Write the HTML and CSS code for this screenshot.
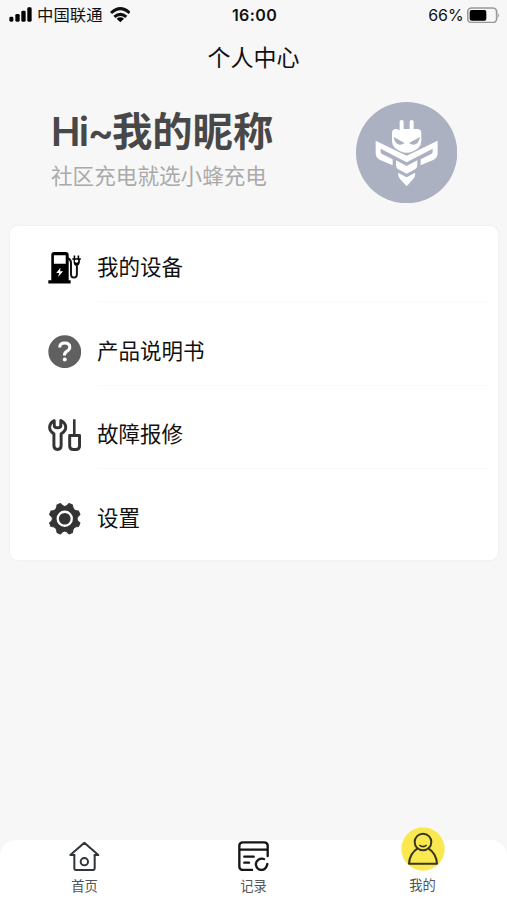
FILE: index.html
```html
<!DOCTYPE html>
<html lang="zh-CN">
<head>
<meta charset="utf-8">
<meta name="viewport" content="width=device-width, initial-scale=1">
<title>个人中心</title>
<link rel="stylesheet" href="styles.css">
</head>
<body>
<div class="screen">
  <div class="status">
    <div class="status-left">
      <svg class="signal" viewBox="28 20 69 46"><rect x="29" y="49" width="12" height="15" rx="4"/><rect x="47" y="41" width="13" height="23" rx="4"/><rect x="65" y="31" width="13" height="33" rx="4"/><rect x="83" y="21" width="13" height="43" rx="4"/></svg>
      <span class="carrier">中国联通</span>
      <svg class="wifi" viewBox="330 20 62 46"><g fill="none" stroke="#111" stroke-width="9"><path d="M333 38Q361 12 389 38"/><path d="M343 50Q361 34 379 50"/></g><path d="M350 55Q361 46 372 55L361 66Z"/></svg>
    </div>
    <time class="clock">16:00</time>
    <div class="status-right">
      <span>66%</span>
      <svg class="battery" viewBox="201 17 100 50"><rect x="203" y="20" width="87" height="44" rx="12" fill="none" stroke="#999" stroke-width="5"/><rect x="209" y="26" width="50" height="32" rx="6"/><path d="M294 36q6 6 0 13z" fill="#999"/></svg>
    </div>
  </div>
  <h1 class="title">个人中心</h1>
  <header class="profile">
    <div class="intro">
      <p class="name"><span class="hi">Hi~</span>我的昵称</p>
      <p class="slogan">社区充电就选小蜂充电</p>
    </div>
    <svg class="avatar" viewBox="32 28 304 304">
      <circle cx="184" cy="180" r="152" fill="#abb1c1"/>
      <g fill="#fff">
        <path d="M163 112V87q0-5 6-5t6 5v22h18V87q0-5 6-5t6 5v22h11q12 0 12 12v25q0 12-9 20-17 14-35 14t-35-14q-9-8-9-20v-25q0-12 12-12z"/>
        <path d="M91 144L184 189L277 144V182Q277 195 265 201L226 218V200L258 184Q262 182 262 177V168L184 209L106 168V177Q106 182 110 184L142 200V218L103 201Q91 195 91 182Z"/>
        <path d="M152 203l32 17 32-17v15q0 8-7 12l-25 13-25-13q-7-4-7-12z"/>
        <path d="M158 240l26 14 26-14q0 13-7 20l-19 21-19-21q-7-7-7-20z"/>
      </g>
      <path d="M145 133l33 18q-12 9-21 3-9-5-12-21zM224 133l-33 18q12 9 21 3 9-5 12-21z" fill="#abb1c1"/>
    </svg>
  </header>
  <nav class="menu">
    <a class="item">
      <svg class="icon" viewBox="23 33 102 100"><path fill-rule="evenodd" d="M33 44q0-9 9-9h35q9 0 9 9v77h6v10H24v-10h9zM41 45v26h36V45zM61 83L48 99h9l-3 12 15-17h-9z"/><path d="M84 54q9 4 9 14v33q0 12 9 12t9-12V76" fill="none" stroke="#111" stroke-width="6"/><path d="M97 54h4v-8h5v8h7v-8h5v8h5v5h-3v7q-2 11-10 11t-9-11v-7h-4z"/><path d="M105 59h10v6q-5 6-10 0z" fill="#fff"/></svg>
      <span class="label">我的设备</span>
    </a>
    <a class="item">
      <svg class="icon" viewBox="23 284 100 100"><circle cx="73" cy="334" r="49" fill="#606060"/><path d="M58 321q0-13 15-13t15 12q0 8-9 13-7 4-7 12" fill="none" stroke="#fff" stroke-width="9"/><circle cx="73" cy="357" r="6" fill="#fff"/></svg>
      <span class="label">产品说明书</span>
    </a>
    <a class="item">
      <svg class="icon" viewBox="23 39 102 100"><g fill="none" stroke="#343434" stroke-width="9" stroke-linejoin="round"><path d="M42 46q-14 7-14 21 0 11 13 19v36q0 12 11 12t11-12V86q14-8 14-19 0-14-15-21v15q0 7-10 7t-10-7z"/><path d="M103 42v48" stroke-width="8"/><path d="M89 91h30v32q0 11-11 11h-8q-11 0-11-11z"/></g></svg>
      <span class="label">故障报修</span>
    </a>
    <a class="item">
      <svg class="icon" viewBox="22 290 100 100"><g transform="translate(72 340)"><path d="M45.3 12.6L40.9 23.1Q23 23 23.1 40.9L12.6 45.3Q0 28 -12.6 45.3L-23.1 40.9Q-23 23 -40.9 23.1L-45.3 12.6Q-28 0 -45.3 -12.6L-40.9 -23.1Q-23 -23 -23.1 -40.9L-12.6 -45.3Q0 -28 12.6 -45.3L23.1 -40.9Q23 -23 40.9 -23.1L45.3 -12.6Q28 0 45.3 12.6Z" fill="#343434" stroke="#343434" stroke-width="3" stroke-linejoin="round"/><circle r="21" fill="none" stroke="#fff" stroke-width="7"/></g></svg>
      <span class="label">设置</span>
    </a>
  </nav>
  <nav class="tabs">
    <a class="tab">
      <svg class="tab-icon" viewBox="60 45 92 92"><g fill="none" stroke="#30343b" stroke-width="6" stroke-linejoin="round" stroke-linecap="round"><path d="M76 87v40q0 5 5 5h51q5 0 5-5V87"/><path d="M76 87H64l42-37 42 37h-11"/><circle cx="106" cy="107" r="11"/></g></svg>
      <span>首页</span>
    </a>
    <a class="tab">
      <svg class="tab-icon" viewBox="56 45 92 92"><g fill="none" stroke="#151515" stroke-width="7" stroke-linecap="round"><path d="M98 132H71q-11 0-11-11V59q0-10 11-10h63q11 0 11 10v31M61 71h83M75 92h28M75 110h14"/><path d="M134 99q-9-3-17 2-9 6-7 17 3 13 16 14 14 0 18-18"/></g></svg>
      <span>记录</span>
    </a>
    <a class="tab active">
      <svg class="me" viewBox="47 35 132 132"><circle cx="113" cy="101" r="65" fill="#f9e84e"/><g fill="none" stroke="#38361f" stroke-width="6" stroke-linejoin="round"><circle cx="113" cy="80" r="25"/><path d="M97 99q-24 15-26 46h84q-2-31-26-46"/><path d="M102 89q11 10 22 0" stroke-width="5"/></g></svg>
      <span>我的</span>
    </a>
  </nav>
</div>
</body>
</html>
```
FILE: styles.css
```css
* { box-sizing: border-box; }

body {
  margin: 0;
  background: #f7f7f7;
  color: #111;
  font-family: "Liberation Sans", "Noto Sans CJK SC", sans-serif;
}

p, h1 { margin: 0; }
svg { display: block; flex: none; }

.screen {
  display: flex;
  flex-direction: column;
  height: 900px;
  overflow: hidden;
}

.status {
  display: grid;
  grid-template-columns: 1fr auto 1fr;
  align-items: center;
  height: 29px;
  padding: 0 7px 0 9px;
  font-family: Inter, "Noto Sans CJK SC", sans-serif;
  font-size: 16px;
  line-height: 30px;
}
.status-left { display: flex; align-items: center; }
.status-right { display: flex; align-items: center; justify-content: flex-end; gap: 3px; }
.signal { width: 23px; height: 15.3px; }
.carrier { margin: 0 7px 0 5px; font-size: 16.4px; }
.wifi { width: 20.7px; height: 15.3px; }
.clock { font-size: 16px; font-weight: 600; letter-spacing: .4px; }
.battery { width: 33.3px; height: 16.7px; }

.title {
  height: 55px;
  font-size: 23px;
  font-weight: 400;
  line-height: 59px;
  text-align: center;
}

.profile {
  display: flex;
  justify-content: space-between;
  height: 142px;
  padding: 18px 50px 0 51px;
}
.name {
  height: 58px;
  color: #484848;
  font-size: 40.3px;
  font-weight: 700;
  line-height: 60px;
  white-space: nowrap;
}
.hi {
  display: inline-block;
  width: 61px;
  font-family: Inter, sans-serif;
  font-size: 39.5px;
  font-weight: 600;
  letter-spacing: -1.6px;
}
.slogan {
  color: #aaa;
  font-size: 21.6px;
  line-height: 33px;
}
.avatar { width: 101.3px; height: 101.3px; }

.menu {
  margin: 0 9px 0 10px;
  border-radius: 8px;
  background: #fff;
  box-shadow: 0 0 3px rgba(0, 0, 0, .06);
}
.item {
  display: flex;
  align-items: center;
  gap: 16px;
  height: 83.5px;
  padding-left: 37.5px;
}
.icon { width: 33.5px; height: 33.5px; }
.label {
  flex: 1;
  height: 69px;
  margin-right: 10px;
  border-bottom: 1px solid #fafafa;
  font-size: 21.5px;
  line-height: 71px;
}
.item:last-child .label { border-bottom: 0; }

.tabs {
  display: grid;
  grid-template-columns: repeat(3, 1fr);
  height: 60px;
  margin-top: auto;
  border-radius: 16px 16px 0 0;
  background: #fff;
}
.tab {
  display: flex;
  flex-direction: column;
  align-items: center;
  color: #555;
  font-size: 13.3px;
  line-height: 20px;
}
.tab-icon { width: 30.7px; height: 30.7px; margin: .5px 0 5.5px; }
.me { width: 44px; height: 44px; margin: -13px 0 5px; }
```
